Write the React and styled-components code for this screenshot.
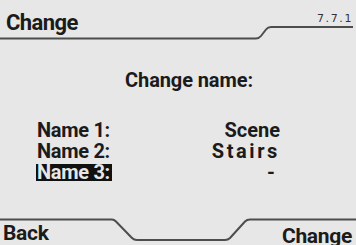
import styled, { createGlobalStyle } from "styled-components"

const GlobalStyle = createGlobalStyle`
  html, body { margin:0; padding:0; background:#e7e7e7; }
`

const Screen = styled.div`
  width:356px;
  height:245px;
  display:flex;
  flex-direction:column;
  background:#e7e7e7;
  color:#1b1b1b;
  overflow:hidden;
  font-family:Roboto, "DejaVu Sans", sans-serif;
  font-weight:700;
`

const Header = styled.header`
  position:relative;
  height:40px;
  flex:none;
  display:flex;
  justify-content:space-between;
  align-items:flex-start;
`

const Frame = styled.svg`
  position:absolute;
  left:0;
  top:0;
  pointer-events:none;
`

const Title = styled.div`
  font-size:22px;
  line-height:26px;
  letter-spacing:-0.6px;
  margin:10px 0 0 6px;
`

const Version = styled.div`
  font-family:"DejaVu Sans", sans-serif;
  font-size:11px;
  line-height:12px;
  font-weight:normal;
  letter-spacing:1.6px;
  padding:13px 3px 0 0;
  color:#333;
`

const Body = styled.main`
  flex:1;
  display:flex;
  flex-direction:column;
`

const Prompt = styled.div`
  text-align:center;
  font-size:20px;
  line-height:24px;
  letter-spacing:-0.1px;
  margin:28px 0 0 22px;
`

const List = styled.div`
  display:grid;
  grid-template-columns:auto 1fr;
  row-gap:4px;
  margin:30px 76px 0 36px;
`

const Label = styled.div`
  font-size:20px;
  line-height:17px;
  letter-spacing:-0.3px;
  padding:0 2px 0 1px;
  justify-self:start;
  background:${({ $selected }) => ($selected ? "#111" : "transparent")};
  color:${({ $selected }) => ($selected ? "#e7e7e7" : "inherit")};
`

const Value = styled.div`
  font-size:20px;
  line-height:17px;
  letter-spacing:${({ $wide }) => ($wide ? "2.6px" : "0")};
  text-align:right;
  padding-right:${({ $dash }) => ($dash ? "5px" : "0")};
`

const Footer = styled.footer`
  position:relative;
  height:29px;
  flex:none;
  display:flex;
  justify-content:space-between;
  align-items:flex-start;
`

const SoftKey = styled.div`
  font-size:21px;
  line-height:24px;
  letter-spacing:-0.3px;
  padding:${({ $right }) => ($right ? "8px 4px 0 0" : "5px 0 0 3px")};
`

const rows = [
  { label: "Name 1:", value: "Scene" },
  { label: "Name 2:", value: "Stairs", wide: true },
  { label: "Name 3:", value: "-", selected: true, dash: true },
]

export default function App() {
  return (
    <Screen>
      <GlobalStyle />
      <Header>
        <Frame width="356" height="40" viewBox="0 0 356 40">
          <path d="M0 38.5 H256 Q259 38.5 261 36 L266 29.5 Q268 27 271 27 H353" fill="none" stroke="#4d4d4d" strokeWidth="2" />
        </Frame>
        <Title>Change</Title>
        <Version>7.7.1</Version>
      </Header>
      <Body>
        <Prompt>Change name:</Prompt>
        <List>
          {rows.map((r) => (
            <>
              <Label key={r.label} $selected={r.selected}>{r.label}</Label>
              <Value key={r.label + "v"} $wide={r.wide} $dash={r.dash}>{r.value}</Value>
            </>
          ))}
        </List>
      </Body>
      <Footer>
        <Frame width="356" height="29" viewBox="0 0 356 29">
          <path d="M0 3.5 H112 Q114 3.5 116 5.5 L132 22 Q134 24 137 24 H225 Q228 24 230 22 L245 5.5 Q247 3.5 250 3.5 H356" fill="none" stroke="#4d4d4d" strokeWidth="2" />
        </Frame>
        <SoftKey>Back</SoftKey>
        <SoftKey $right>Change</SoftKey>
      </Footer>
    </Screen>
  )
}
